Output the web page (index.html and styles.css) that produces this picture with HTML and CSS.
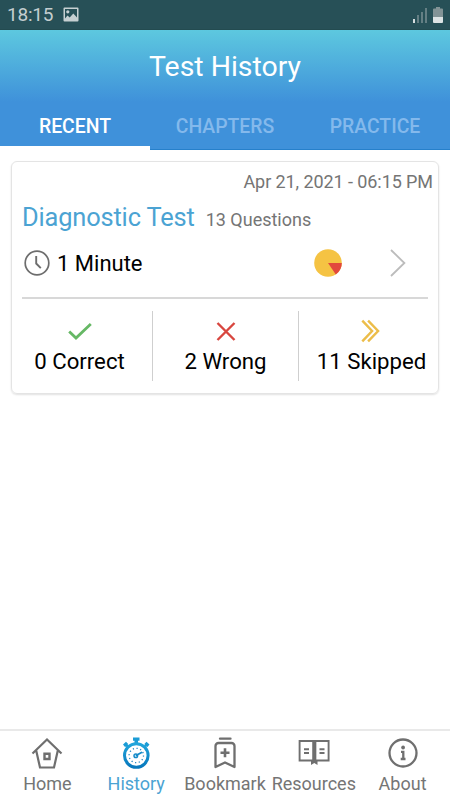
FILE: index.html
```html
<!DOCTYPE html>
<html lang="en">
<head>
  <meta charset="UTF-8">
  <meta name="viewport" content="width=device-width, initial-scale=1.0">
  <title>Test History</title>
  <link rel="stylesheet" href="styles.css">
</head>
<body>

<div class="statusbar">
  <span class="time">18:15</span>
  <svg class="status-image" width="16" height="15" viewBox="0 0 16 15">
    <path fill="#c6d0d2" fill-rule="evenodd" d="M1.5 0.5h13a1 1 0 0 1 1 1v12a1 1 0 0 1-1 1h-13a1 1 0 0 1-1-1v-12a1 1 0 0 1 1-1zM2 2v9.500l2.500-3 2.200 2 3.600-4 3.700 4V2z"/>
    <circle cx="4.800" cy="4.800" r="1.600" fill="#c6d0d2"/>
  </svg>
  <svg class="status-right" width="32" height="18" viewBox="0 0 32 18">
    <path fill="#d5dddf" d="M1 13h2v4h-2z"/>
    <path fill="#647f84" d="M5 9h2v8h-2zM9 6h2v11h-2zM13 2h2v15h-2z"/>
    <path fill="#829396" d="M24 1h4v1.500h2a1 1 0 0 1 1 1V11H21V3.500a1 1 0 0 1 1-1h2z"/>
    <path fill="#dce3e4" d="M21 11h10v5a1 1 0 0 1-1 1h-8a1 1 0 0 1-1-1z"/>
  </svg>
</div>

<header class="header">
  <h1>Test History</h1>
</header>

<div class="tabs">
  <div class="tab active"><span>RECENT</span></div>
  <div class="tab"><span>CHAPTERS</span></div>
  <div class="tab"><span>PRACTICE</span></div>
</div>

<main class="content">
  <div class="card">
    <div class="date"><span>Apr 21, 2021 - 06:15 PM</span></div>
    <div class="test">
      <span class="test-name">Diagnostic Test</span>
      <span class="questions">13 Questions</span>
    </div>
    <div class="duration">
      <svg width="26" height="26" viewBox="0 0 26 26" fill="none" stroke="#6d6d6d" stroke-width="1.700">
        <circle cx="13" cy="13" r="11.800"/>
        <path d="M12.200 6v7.500l4.600 4.700" stroke-width="1.900"/>
      </svg>
      <span class="minutes">1 Minute</span>
      <svg class="pie" width="28" height="28" viewBox="0 0 28 28">
        <circle cx="14" cy="14" r="13.800" fill="#f5c343"/>
        <path d="M14 14h13.800a13.800 13.800 0 0 1-6 11.400z" fill="#e2483d"/>
      </svg>
      <svg class="arrow" width="16" height="28" viewBox="0 0 16 28" fill="none" stroke="#bcbcbc" stroke-width="1.800">
        <path d="M1 1l13.400 13L1 27"/>
      </svg>
    </div>
    <div class="divider"></div>
    <div class="results">
      <div class="result">
        <svg width="24" height="24" viewBox="0 0 24 24" fill="none" stroke="#66b865" stroke-width="2.800">
          <path d="M1.200 12.500l6.800 6.500L22.800 5"/>
        </svg>
        <span>0 Correct</span>
      </div>
      <div class="result">
        <svg width="24" height="24" viewBox="0 0 24 24" fill="none" stroke="#d8463f" stroke-width="2.400">
          <path d="M3.500 4l17 17M20.500 4l-17 17"/>
        </svg>
        <span>2 Wrong</span>
      </div>
      <div class="result">
        <svg width="24" height="24" viewBox="0 0 24 24" fill="none" stroke="#ecbd49" stroke-width="2.400">
          <path d="M2.300 1.700L12.100 12L2.300 22.400M8.100 1.700L18.100 12L8.100 22.400"/>
        </svg>
        <span>11 Skipped</span>
      </div>
    </div>
  </div>
</main>

<nav class="bottom-nav">
  <a class="nav-item">
    <svg width="32" height="34" viewBox="0 0 32 34" fill="none" stroke="#6f6f6f" stroke-width="2.200">
      <path d="M1.500 17.500L16 3.500l14.500 14M5.200 14.500L9 31.500h14l3.800-17"/>
      <path d="M13.500 17.800h5v5.200h-5z" stroke-width="2.400"/>
    </svg>
    <span>Home</span>
  </a>
  <a class="nav-item active">
    <svg width="32" height="34" viewBox="0 0 32 34">
      <defs>
        <linearGradient id="watch" x1="0" y1="0" x2="0" y2="1">
          <stop offset="0" stop-color="#21a5db"/>
          <stop offset="1" stop-color="#0878bd"/>
        </linearGradient>
      </defs>
      <path fill="#1b9cd6" d="M13 1.500h6.500v3.200H18V8h-3.500V4.700H13zM3 8.500l3-2.800 2.200 2.200-.6.900 2 2-1.600 1.600-2-2-1 .6zM29.500 8.500l-3-2.800-2.200 2.200.6.900-2 2 1.600 1.600 2-2 1 .6z"/>
      <circle cx="16.300" cy="19.500" r="11.800" fill="#fff" stroke="url(#watch)" stroke-width="3"/>
      <circle cx="16.300" cy="19.500" r="7.200" fill="none" stroke="#2086c4" stroke-width="1.300" stroke-dasharray="1.200 2.570"/>
      <circle cx="15.800" cy="19.700" r="1.800" fill="none" stroke="#168bc9" stroke-width="1.500"/>
      <path d="M16.500 19.300l5-2.800" stroke="#168bc9" stroke-width="1.800" stroke-linecap="round"/>
    </svg>
    <span>History</span>
  </a>
  <a class="nav-item">
    <svg width="32" height="34" viewBox="0 0 32 34" fill="none" stroke="#6f6f6f" stroke-width="2.300">
      <path d="M11 2.700h10.500" stroke-linecap="round"/>
      <path d="M6.500 31V10a3 3 0 0 1 3-3h13a3 3 0 0 1 3 3v21l-9.500-4.500z" stroke-linejoin="round"/>
      <path d="M16 12.300v9M11.500 16.800h9" stroke-width="2.600"/>
    </svg>
    <span>Bookmark</span>
  </a>
  <a class="nav-item">
    <svg width="32" height="34" viewBox="0 0 32 34" fill="none" stroke="#6f6f6f" stroke-width="1.900">
      <path d="M1.600 5h13.600v19.500H1.600zM17.400 5h13.200v19.500H17.400z"/>
      <path d="M16.300 4v21" stroke-width="2.800"/>
      <path d="M6 13.200h5M6 17h5M21.500 13.200h5M21.500 17h5"/>
      <path d="M13 24h6.500v5l-3.200-2-3.300 2z" fill="#6f6f6f" stroke="none"/>
    </svg>
    <span>Resources</span>
  </a>
  <a class="nav-item">
    <svg width="32" height="34" viewBox="0 0 32 34" fill="none" stroke="#6f6f6f" stroke-width="2.300">
      <circle cx="16" cy="17" r="13.500"/>
      <path d="M14 15.800h2.300v6.500M13.700 23h4.800" stroke-width="2.300"/>
      <circle cx="16.100" cy="11.500" r="1.900" fill="#6f6f6f" stroke="none"/>
    </svg>
    <span>About</span>
  </a>
</nav>

</body>
</html>
```
FILE: styles.css
```css
* {
  box-sizing: border-box;
}
body {
  display: flex;
  flex-direction: column;
  height: 800px;
  margin: 0;
  font-family: Roboto, sans-serif;
  background-color: #fff;
}
svg {
  display: block;
  flex: none;
}
span {
  white-space: nowrap;
}
.statusbar {
  display: flex;
  align-items: center;
  height: 30px;
  padding: 0 6px 0 7px;
  border-bottom: 1px solid #234b50;
  color: #c4ced0;
  background-color: #275057;
}
.time {
  font-size: 19px;
  line-height: 32px;
  letter-spacing: -0.2px;
}
.status-image {
  margin-left: 10px;
}
.status-right {
  margin-left: auto;
}
.header {
  height: 72px;
  background: linear-gradient(#5dc8df, #3f91da);
}
h1 {
  margin: 0;
  font-size: 28.4px;
  font-weight: 400;
  line-height: 73px;
  text-align: center;
  color: #fff;
}
.tabs {
  display: flex;
  height: 48px;
  background-color: #3f91da;
}
.tab {
  flex: 1;
  border-bottom: 1px solid #2680cb;
  font-size: 19.4px;
  font-weight: 500;
  line-height: 49px;
  text-align: center;
  color: #84b9ec;
}
.tab.active {
  border-bottom: 4px solid #fff;
  color: #fff;
}
.content {
  flex: 1;
  padding: 11px;
}
.card {
  height: 233px;
  padding: 10px 5px 0 10px;
  border: 1px solid #e4e4e4;
  border-radius: 6px;
  box-shadow: 0 1px 2px rgba(0, 0, 0, 0.12);
}
.date {
  height: 20px;
  font-size: 18px;
  line-height: 20px;
  letter-spacing: -0.08px;
  text-align: right;
  color: #757575;
}
.test {
  display: flex;
  align-items: baseline;
  gap: 11px;
  height: 50px;
  line-height: 51px;
}
.test-name {
  font-size: 25.4px;
  letter-spacing: -0.15px;
  color: #4ba3d3;
}
.questions {
  font-size: 18px;
  color: #757575;
}
.duration {
  display: flex;
  align-items: center;
  height: 42px;
  padding: 0 27px 0 2px;
}
.minutes {
  margin-left: 7px;
  font-size: 22px;
  color: #000;
}
.pie {
  margin-left: auto;
}
.arrow {
  margin-left: 48px;
}
.divider {
  width: 406px;
  height: 2px;
  margin-top: 13px;
  background-color: #d8d8d8;
}
.results {
  display: flex;
  margin: 12px -11px 0 -15px;
}
.result {
  display: flex;
  flex: 1;
  flex-direction: column;
  align-items: center;
  height: 70px;
  padding-top: 8px;
  font-size: 22.2px;
  line-height: 37px;
  color: #000;
}
.result + .result {
  border-left: 1px solid #cfcfcf;
}
.bottom-nav {
  display: flex;
  height: 71px;
  padding: 0 3px;
  border-top: 2px solid #e9e9e9;
}
.nav-item {
  display: flex;
  flex: 0 0 88.8px;
  flex-direction: column;
  align-items: center;
  padding-top: 5px;
  font-size: 18px;
  line-height: 28px;
  color: #757575;
}
.nav-item.active {
  color: #4ba3d3;
}
```
